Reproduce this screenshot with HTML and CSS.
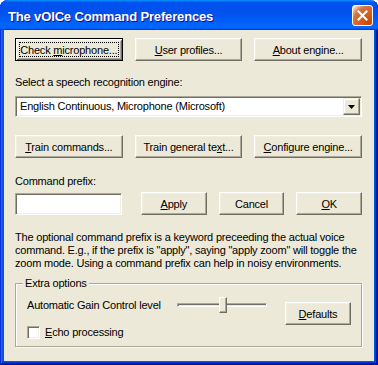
FILE: index.html
```html
<!DOCTYPE html>
<html>
<head>
<meta charset="utf-8">
<link rel="stylesheet" href="styles.css">
</head>
<body>
<div class="window">
  <div class="titlebar">
    <span class="title">The vOICe Command Preferences</span>
    <button class="close" aria-label="Close">
      <svg width="11" height="11" viewBox="0 0 11 11"><path d="M1.5 1.5 L9.5 9.5 M9.5 1.5 L1.5 9.5" stroke="#fff" stroke-width="2" stroke-linecap="square"/></svg>
    </button>
  </div>
  <div class="client">
    <div class="btnrow">
      <button class="btn default">Check <u>m</u>icrophone...</button>
      <button class="btn"><u>U</u>ser profiles...</button>
      <button class="btn"><u>A</u>bout engine...</button>
    </div>
    <div class="lbl">Select a speech recognition engine:</div>
    <div class="combo">
      <span class="combo-text">English Continuous, Microphone (Microsoft)</span>
      <span class="drop"><svg width="7" height="4" viewBox="0 0 7 4"><path d="M0 0H7L3.5 4Z" fill="#000"/></svg></span>
    </div>
    <div class="btnrow row2">
      <button class="btn"><u>T</u>rain commands...</button>
      <button class="btn">Train general te<u>x</u>t...</button>
      <button class="btn"><u>C</u>onfigure engine...</button>
    </div>
    <div class="lbl lbl2">Command prefix:</div>
    <div class="prefix-row">
      <div class="textbox"></div>
      <div class="actions">
        <button class="btn"><u>A</u>pply</button>
        <button class="btn">Cancel</button>
        <button class="btn"><u>O</u>K</button>
      </div>
    </div>
    <p class="note">The optional command prefix is a keyword preceeding the actual voice<br>command. E.g., if the prefix is "apply", saying "apply zoom" will toggle the<br>zoom mode. Using a command prefix can help in noisy environments.</p>
    <fieldset class="group">
      <legend>Extra options</legend>
      <div class="group-body">
        <div class="group-left">
          <div class="agc">
            <span>Automatic Gain Control level</span>
            <div class="slider"><div class="track"></div><div class="thumb"></div></div>
          </div>
          <label class="check"><span class="box"></span><span><u>E</u>cho processing</span></label>
        </div>
        <button class="btn defaults"><u>D</u>efaults</button>
      </div>
    </fieldset>
  </div>
</div>
</body>
</html>
```
FILE: styles.css
```css
html, body {
  margin: 0;
  background: #ffffff;
}
body {
  font-family: "Liberation Sans", Arial, sans-serif;
  font-size: 11px;
  color: #000;
}
.window {
  width: 378px;
  height: 365px;
  box-sizing: border-box;
  display: flex;
  flex-direction: column;
  padding: 0 4px 4px;
  background: #0054e3;
  border-radius: 8px 8px 0 0;
  overflow: hidden;
  box-shadow: inset -1px -1px #00138c, inset 1px 0 #0831d9, inset -2px -2px #001ea0, inset 2px 0 #166aee, inset -3px -3px #003bda, inset 3px 0 #0855dd;
}
.titlebar {
  height: 30px;
  margin: 0 -4px;
  flex: none;
  display: flex;
  align-items: center;
  justify-content: space-between;
  padding: 0 5px 0 8px;
  background: linear-gradient(180deg, #0997ff, #0053ee 8%, #0050ee 40%, #0066ff 88%, #0066ff 93%, #005bff 95%, #003dd7 96%, #003dd7);
  border-radius: 8px 8px 0 0;
}
.title {
  color: #fff;
  font-weight: bold;
  font-size: 13px;
  letter-spacing: -0.15px;
  text-shadow: 1px 1px #0f1089;
  padding-top: 2px;
}
.close {
  width: 21px;
  height: 21px;
  box-sizing: border-box;
  border: 1px solid #fff;
  border-radius: 3px;
  padding: 0;
  margin-top: 1px;
  display: flex;
  align-items: center;
  justify-content: center;
  background: radial-gradient(circle at 90% 90%, #cc4600 0%, #dc6527 55%, #cd7546 70%, #ffccb2 90%, #fff 100%);
}
.client {
  flex: 1;
  background: #ece9d8;
  padding: 8px 12px 0 11px;
  letter-spacing: -0.2px;
}
.btn {
  font: inherit;
  letter-spacing: inherit;
  color: #000;
  background: #ece9d8;
  height: 23px;
  box-sizing: border-box;
  border: 1px solid;
  border-color: #fff #716f64 #716f64 #fff;
  box-shadow: inset -1px -1px #aca899, inset 1px 1px #f1efe2;
  padding: 0;
  position: relative;
  white-space: nowrap;
}
.btn.default {
  border-color: #000;
  box-shadow: inset 1px 1px #fff, inset -1px -1px #716f64, inset 2px 2px #f1efe2, inset -2px -2px #aca899;
}
.btn.default::after {
  content: "";
  position: absolute;
  inset: 3px;
  border: 1px dotted #000;
}
.btnrow {
  display: grid;
  grid-template-columns: 1fr 1fr 1fr;
  column-gap: 12px;
}
.row2 {
  margin-top: 18px;
}
.lbl {
  margin-top: 15px;
  line-height: 13px;
}
.lbl2 {
  margin-top: 17px;
}
.combo {
  margin-top: 7px;
  height: 21px;
  box-sizing: border-box;
  display: flex;
  padding: 1px;
  background: #fff;
  border: 1px solid;
  border-color: #aca899 #fff #fff #aca899;
  box-shadow: inset 1px 1px #716f64, inset -1px -1px #f1efe2;
}
.combo-text {
  flex: 1;
  line-height: 17px;
  padding-left: 3px;
}
.drop {
  width: 17px;
  height: 17px;
  box-sizing: border-box;
  background: #ece9d8;
  border: 1px solid;
  border-color: #f1efe2 #716f64 #716f64 #f1efe2;
  box-shadow: inset -1px -1px #aca899, inset 1px 1px #fff;
  display: flex;
  align-items: center;
  justify-content: center;
}
.prefix-row {
  margin-top: 4px;
  display: flex;
  align-items: flex-start;
}
.textbox {
  width: 107px;
  height: 22px;
  margin-top: 1px;
  margin-right: 19px;
  box-sizing: border-box;
  background: #fff;
  border: 1px solid;
  border-color: #aca899 #fff #fff #aca899;
  box-shadow: inset 1px 1px #716f64, inset -1px -1px #f1efe2;
}
.actions {
  flex: 1;
  display: grid;
  grid-template-columns: 1fr 1fr 1fr;
  column-gap: 12px;
}
.note {
  margin: 16px 0 0;
  line-height: 13px;
  white-space: nowrap;
}
.group {
  margin: 7px 0 0;
  padding: 0;
  min-width: 0;
  border: 1px solid #aca899;
  box-shadow: inset 1px 1px #fff, 1px 1px #fff;
}
.group legend {
  margin-left: 7px;
  padding: 0 2px;
  line-height: 13px;
  background: #ece9d8;
}
.group-body {
  display: flex;
  justify-content: space-between;
  align-items: flex-start;
  padding: 7px 10px 7px 11px;
}
.group-left {
  width: 240px;
  display: flex;
  flex-direction: column;
  row-gap: 13px;
}
.agc {
  display: flex;
  justify-content: space-between;
  align-items: center;
  height: 16px;
  line-height: 13px;
}
.slider {
  position: relative;
  width: 90px;
  height: 16px;
}
.track {
  position: absolute;
  left: 0;
  right: 0;
  top: 6px;
  height: 4px;
  box-sizing: border-box;
  border: 1px solid;
  border-color: #aca899 #fff #fff #aca899;
  box-shadow: inset 1px 1px #716f64;
  background: #ece9d8;
}
.thumb {
  position: absolute;
  left: 42px;
  top: 0;
  width: 8px;
  height: 16px;
  box-sizing: border-box;
  background: #ece9d8;
  border: 1px solid;
  border-color: #fff #716f64 #716f64 #fff;
  box-shadow: inset -1px -1px #aca899;
}
.check {
  display: flex;
  align-items: center;
  column-gap: 5px;
  line-height: 13px;
}
.box {
  width: 13px;
  height: 13px;
  box-sizing: border-box;
  background: #fff;
  border: 1px solid;
  border-color: #aca899 #fff #fff #aca899;
  box-shadow: inset 1px 1px #716f64, inset -1px -1px #f1efe2;
}
.defaults {
  width: 66px;
  margin-top: 5px;
}
```
